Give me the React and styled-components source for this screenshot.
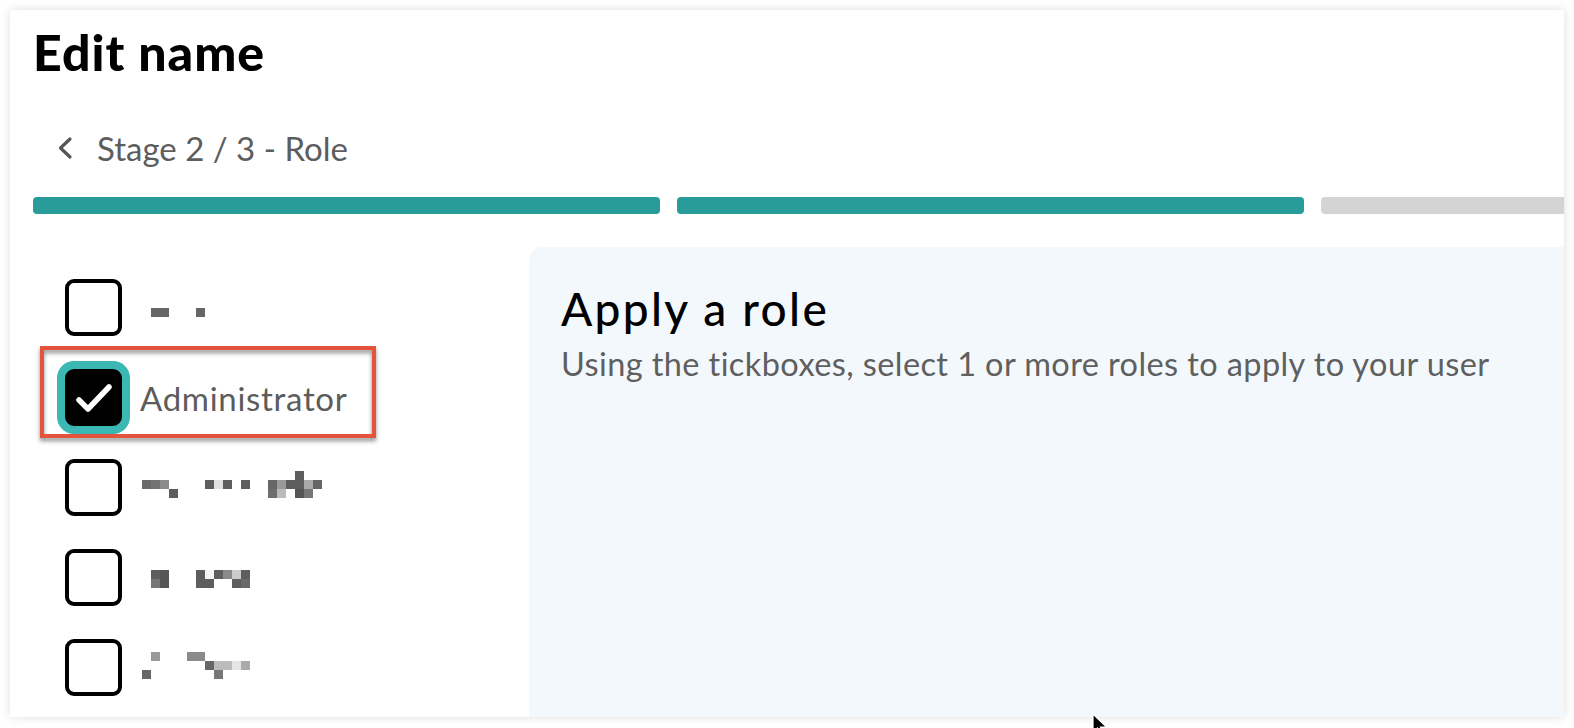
import React from "react";
import styled, { createGlobalStyle } from "styled-components";

const GlobalStyle = createGlobalStyle`
    html, body {
        margin: 0;
        background: #ffffff;
        font-family: Lato, "Open Sans", sans-serif;
        overflow: hidden;
    }
`;

const Page = styled.div`
    position: relative;
    padding: 10px;
    height: 728px;
    box-sizing: border-box;
`;

const Card = styled.div`
    width: 1554px;
    height: 707px;
    background: #fff;
    box-shadow: 0 0 10px rgba(0, 0, 0, 0.13);
    overflow: hidden;
    padding: 13px 0 0 23px;
    box-sizing: border-box;
    display: flex;
    flex-direction: column;
`;

const Title = styled.h1`
    margin: 0;
    font-size: 50px;
    line-height: 58px;
    font-weight: 900;
    color: #000;
    letter-spacing: 1px;
`;

const Breadcrumb = styled.div`
    display: flex;
    align-items: center;
    gap: 23px;
    margin: 49px 0 0 23px;
    color: #5d5d5d;
    font-size: 33px;
    line-height: 36px;

    svg {
        width: 18px;
        height: 24px;
    }
`;

const Steps = styled.div`
    display: flex;
    gap: 17px;
    margin-top: 31px;
`;

const Step = styled.div`
    flex: 0 0 627px;
    height: 17px;
    border-radius: 4px;
    background: ${p => (p.$done ? "#279c98" : "#d4d4d4")};
`;

const Body = styled.div`
    flex: 1;
    display: grid;
    grid-template-columns: 496px 1fr;
    margin-top: 33px;
    min-height: 0;
`;

const RoleList = styled.div`
    position: relative;
    display: flex;
    flex-direction: column;
    gap: 33px;
    padding: 32px 0 0 32px;
`;

const Row = styled.label`
    display: flex;
    align-items: center;
    gap: 18px;
    height: 57px;
    color: #5c5c5c;
    font-size: 33px;
    letter-spacing: 0.7px;
`;

const Box = styled.span`
    flex: 0 0 auto;
    width: 57px;
    height: 57px;
    box-sizing: border-box;
    border: 4px solid #000;
    border-radius: 9px;
    background: ${p => (p.$checked ? "#000" : "#fff")};
    box-shadow: ${p => (p.$checked ? "0 0 0 8px #3bb8b4" : "none")};
    display: flex;
    align-items: center;
    justify-content: center;
`;

const Highlight = styled.div`
    position: absolute;
    left: 7px;
    top: 99px;
    width: 336px;
    height: 92px;
    box-sizing: border-box;
    border: 4px solid #e4533d;
    filter: drop-shadow(0 3px 2px rgba(0, 0, 0, 0.45));
    pointer-events: none;
`;

const Panel = styled.section`
    background: #f3f8fc;
    border-top-left-radius: 14px;
    padding: 36px 32px;
`;

const PanelTitle = styled.h2`
    margin: 0;
    font-size: 46px;
    line-height: 52px;
    font-weight: 500;
    letter-spacing: 2.3px;
    color: #000;
`;

const PanelText = styled.p`
    margin: 9px 0 0;
    font-size: 32.5px;
    line-height: 40px;
    letter-spacing: 0.4px;
    color: #5f5f5f;
`;

const Cursor = styled.svg`
    position: absolute;
    left: 1092px;
    top: 713px;
    width: 16px;
    height: 24px;
`;

const roles = [
    { pixels: [[11, 29, 18, "#666"], [56, 29, 9, "#666"]] },
    { name: "Administrator", checked: true },
    {
        pixels: [
            [2, 21, 9, "#6a6a6a"], [11, 21, 9, "#737373"], [20, 21, 9, "#8a8a8a"],
            [65, 21, 9, "#5e5e5e"], [74, 21, 9, "#e2e2e2"], [83, 21, 9, "#5e5e5e"],
            [101, 21, 9, "#5e5e5e"], [128, 21, 9, "#666"], [137, 21, 9, "#9a9a9a"],
            [146, 21, 9, "#5e5e5e"], [155, 12, 9, "#5e5e5e", 18], [164, 21, 9, "#aaa"],
            [173, 21, 9, "#666"], [29, 30, 9, "#5e5e5e"], [128, 30, 9, "#6e6e6e"],
            [137, 30, 9, "#bbb"], [155, 30, 9, "#555"], [164, 30, 9, "#777"],
        ],
    },
    {
        pixels: [
            [11, 21, 9, "#5e5e5e"], [20, 21, 9, "#555"], [56, 21, 9, "#5e5e5e"],
            [65, 21, 9, "#f5f5f5"], [74, 21, 9, "#5e5e5e"], [83, 21, 9, "#8a8a8a"],
            [92, 21, 9, "#ccc"], [101, 21, 9, "#5e5e5e"], [11, 30, 9, "#777"],
            [20, 30, 9, "#555"], [56, 30, 9, "#5e5e5e"], [65, 30, 9, "#5e5e5e"],
            [92, 30, 9, "#5e5e5e"], [101, 30, 9, "#6a6a6a"],
        ],
    },
    {
        pixels: [
            [11, 13, 9, "#999"], [47, 13, 9, "#8a8a8a"], [56, 13, 9, "#8a8a8a"],
            [65, 22, 9, "#666"], [74, 22, 9, "#bbb"], [83, 22, 9, "#bbb"],
            [92, 22, 9, "#e5e5e5"], [101, 22, 9, "#aaa"], [2, 31, 9, "#666"],
            [74, 31, 9, "#777"],
        ],
    },
];

// pixelated (redacted) role names
const Redacted = ({ pixels }) => (
    <svg width="190" height="57" viewBox="0 0 190 57">
        {pixels.map(([x, y, w, fill, h], i) => (
            <rect key={i} x={x} y={y} width={w} height={h || 9} fill={fill} />
        ))}
    </svg>
);

const App = () => {
    return (
        <Page>
            <GlobalStyle />
            <Card>
                <Title>Edit name</Title>
                <Breadcrumb>
                    <svg viewBox="0 0 18 24" fill="none" stroke="#555" strokeWidth="3.2" strokeLinecap="round" strokeLinejoin="round">
                        <path d="M14 3 L4.5 12 L14 21" />
                    </svg>
                    <span>Stage 2 / 3 - Role</span>
                </Breadcrumb>
                <Steps>
                    <Step $done />
                    <Step $done />
                    <Step />
                </Steps>
                <Body>
                    <RoleList>
                        {roles.map((role, i) => (
                            <Row key={i}>
                                <Box $checked={role.checked}>
                                    {role.checked && (
                                        <svg width="38" height="32" viewBox="0 0 38 32" fill="none" stroke="#fff" strokeWidth="5.5" strokeLinecap="round" strokeLinejoin="round">
                                            <path d="M4 18 L13 27 L34 5" />
                                        </svg>
                                    )}
                                </Box>
                                {role.name ? <span>{role.name}</span> : <Redacted pixels={role.pixels} />}
                            </Row>
                        ))}
                        <Highlight />
                    </RoleList>
                    <Panel>
                        <PanelTitle>Apply a role</PanelTitle>
                        <PanelText>Using the tickboxes, select 1 or more roles to apply to your user</PanelText>
                    </Panel>
                </Body>
            </Card>
            <Cursor viewBox="0 0 16 24">
                <path d="M1 1 L1 19 L5.5 15 L9 23 L12 21.5 L8.5 14 L14.5 14 Z" fill="#000" stroke="#fff" strokeWidth="1.2" />
            </Cursor>
        </Page>
    );
};

export default App;
